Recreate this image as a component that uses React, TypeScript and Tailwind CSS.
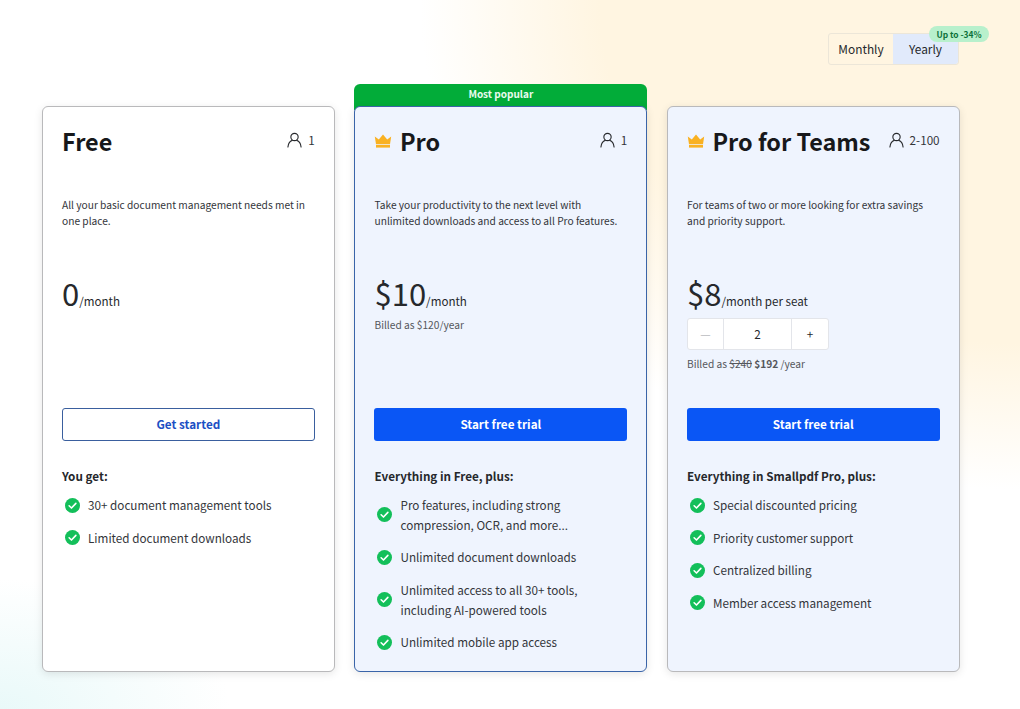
import { type ReactNode } from 'react';

const font = "font-['Noto_Sans_CJK_SC','Noto_Sans',sans-serif]";

function UserIcon() {
    return (
        <svg width="15" height="16" viewBox="0 0 16 16" fill="none" stroke="#26282c" strokeWidth="1.2" strokeLinecap="round" className="shrink-0">
            <circle cx="8" cy="4.8" r="3.9" />
            <path d="M1 15.4c.4-3.6 2.3-6.2 4.6-7M15 15.4c-.4-3.6-2.3-6.2-4.6-7" />
        </svg>
    );
}

function Crown() {
    return (
        <svg width="18" height="14" viewBox="0 0 18 14" className="shrink-0">
            <path d="M.8 2.6l4 3L9 .4l4.2 5.2 4-3-1.2 7.6H2z" fill="#f9b122" />
            <rect x="2" y="11" width="14" height="2.6" fill="#f9b122" />
        </svg>
    );
}

function Check() {
    return (
        <svg width="15" height="15" viewBox="0 0 16 16" className="shrink-0">
            <circle cx="8" cy="8" r="8" fill="#13bf5a" />
            <path d="M4.4 8.3l2.5 2.4 4.7-5" fill="none" stroke="#fff" strokeWidth="1.7" strokeLinecap="round" strokeLinejoin="round" />
        </svg>
    );
}

function Feature({ children }: { children: ReactNode }) {
    return (
        <li className="flex items-center text-[11.7px] leading-[20px] text-[#33353a]">
            <span className="ml-[3px] mr-[8px]"><Check /></span>
            <span>{children}</span>
        </li>
    );
}

function Header({ name, seats, crown }: { name: string; seats: string; crown?: boolean }) {
    return (
        <div className="flex h-[36px] items-center justify-between">
            <div className="mb-[2px] flex items-center gap-[7.5px]">
                {crown && <Crown />}
                <h2 className="text-[23.4px] leading-[36px] font-bold text-[#17181b]">{name}</h2>
            </div>
            <div className="mb-[5px] flex items-center gap-[6px] whitespace-nowrap text-[11.7px] leading-[20px] text-[#33353a]">
                <UserIcon />
                <span>{seats}</span>
            </div>
        </div>
    );
}

function Price({ amount, unit }: { amount: string; unit: string }) {
    return (
        <div className="mt-[42px] flex h-[44px] items-baseline text-[#26282c]">
            <span className="text-[31px] leading-[44px]">{amount}</span>
            <span className="text-[11.6px] leading-[20px]">{unit}</span>
        </div>
    );
}

export default function App() {
    return (
        <div className={`${font} relative h-[709px] w-[1020px] overflow-hidden bg-white bg-[radial-gradient(ellipse_600px_490px_at_100%_0%,#fff5e1_0%,#fff5e1_70%,rgba(255,255,255,0)_100%),radial-gradient(ellipse_230px_130px_at_0%_100%,#e9f9f9_0%,rgba(255,255,255,0)_100%)]`}>
            <div className="flex justify-end pt-[33px] pr-[61px]">
                <div className="relative flex h-[32px] w-[131px] rounded-[3px] border border-[#ece6d8] text-[11.9px] text-[#26282c]">
                    <button className="flex w-[64px] items-center justify-center">Monthly</button>
                    <button className="flex flex-1 items-center justify-center rounded-r-[3px] bg-[#e1eafb]">Yearly</button>
                    <span className="absolute top-[-8px] left-[100px] flex h-[16px] w-[60px] items-center justify-center rounded-full bg-[#b8f0cc] text-[8.4px] leading-[16px] font-bold text-[#0b7039]">Up to -34%</span>
                </div>
            </div>

            <div className="mt-[19px] flex gap-[19.83px] pl-[42px]">
                {/* Free */}
                <div className="mt-[22px] flex h-[566px] w-[292.67px] flex-col rounded-[6px] border border-[#b9b9bb] bg-white px-[19px] pt-[17px] shadow-[0_2px_8px_rgba(0,0,0,0.1)]">
                    <Header name="Free" seats="1" />
                    <p className="mt-[37px] h-[32px] text-[10.2px] leading-[16px] text-[#33353a]">All your basic document management needs met in one place.</p>
                    <Price amount="0" unit="/month" />
                    <button className="mt-[93px] h-[33px] rounded-[3px] border border-[#3a5f9e] pb-[2px] text-[11.7px] font-bold text-[#1c4fc4]">Get started</button>
                    <h3 className="mt-[25px] text-[11.7px] leading-[20px] font-bold text-[#26282c]">You get:</h3>
                    <ul className="mt-[9px] flex flex-col gap-[12.5px]">
                        <Feature>30+ document management tools</Feature>
                        <Feature>Limited document downloads</Feature>
                    </ul>
                </div>

                {/* Pro */}
                <div className="flex h-[588px] w-[292.67px] flex-col">
                    <div className="flex h-[26px] items-start justify-center rounded-t-[6px] bg-[#02ac39] pt-[2px] text-[10px] leading-[15px] font-bold text-[#e9fbef]">Most popular</div>
                    <div className="mt-[-4px] flex flex-1 flex-col rounded-[6px] border border-[#3a64a8] bg-[#eff4fe] px-[19px] pt-[17px] shadow-[0_2px_8px_rgba(0,0,0,0.1)]">
                        <Header name="Pro" seats="1" crown />
                        <p className="mt-[37px] h-[32px] text-[10.2px] leading-[16px] text-[#33353a]">Take your productivity to the next level with unlimited downloads and access to all Pro features.</p>
                        <Price amount="$10" unit="/month" />
                        <p className="mt-[2px] h-[91px] text-[10.2px] leading-[16px] text-[#55575c]">Billed as $120/year</p>
                        <button className="h-[33px] rounded-[3px] bg-[#0a56f5] pb-[2px] text-[11.7px] font-bold text-white">Start free trial</button>
                        <h3 className="mt-[25px] text-[11.7px] leading-[20px] font-bold text-[#26282c]">Everything in Free, plus:</h3>
                        <ul className="mt-[8.5px] flex flex-col gap-[12.5px]">
                            <Feature>Pro features, including strong<br />compression, OCR, and more...</Feature>
                            <Feature>Unlimited document downloads</Feature>
                            <Feature>Unlimited access to all 30+ tools,<br />including AI-powered tools</Feature>
                            <Feature>Unlimited mobile app access</Feature>
                        </ul>
                    </div>
                </div>

                {/* Teams */}
                <div className="mt-[22px] flex h-[566px] w-[292.67px] flex-col rounded-[6px] border border-[#b9b9bb] bg-[#eff4fe] px-[19px] pt-[17px] shadow-[0_2px_8px_rgba(0,0,0,0.1)]">
                    <Header name="Pro for Teams" seats="2-100" crown />
                    <p className="mt-[37px] h-[32px] text-[10.2px] leading-[16px] text-[#33353a]">For teams of two or more looking for extra savings and priority support.</p>
                    <Price amount="$8" unit="/month per seat" />
                    <div className="mt-[3px] flex h-[32px] w-[142px] rounded-[3px] border border-[#e3e5ea] bg-white text-[11.7px] text-[#26282c]">
                        <span className="flex w-[36px] items-center justify-center border-r border-[#e3e5ea] text-[#b8bac0]">—</span>
                        <span className="flex flex-1 items-center justify-center">2</span>
                        <span className="flex w-[37px] items-center justify-center border-l border-[#e3e5ea]">+</span>
                    </div>
                    <p className="mt-[6px] h-[52px] text-[10.2px] leading-[16px] text-[#55575c]">Billed as <s>$240</s> <b>$192</b> /year</p>
                    <button className="h-[33px] rounded-[3px] bg-[#0a56f5] pb-[2px] text-[11.7px] font-bold text-white">Start free trial</button>
                    <h3 className="mt-[25px] text-[11.7px] leading-[20px] font-bold text-[#26282c]">Everything in Smallpdf Pro, plus:</h3>
                    <ul className="mt-[9px] flex flex-col gap-[12.5px]">
                        <Feature>Special discounted pricing</Feature>
                        <Feature>Priority customer support</Feature>
                        <Feature>Centralized billing</Feature>
                        <Feature>Member access management</Feature>
                    </ul>
                </div>
            </div>
        </div>
    );
}
